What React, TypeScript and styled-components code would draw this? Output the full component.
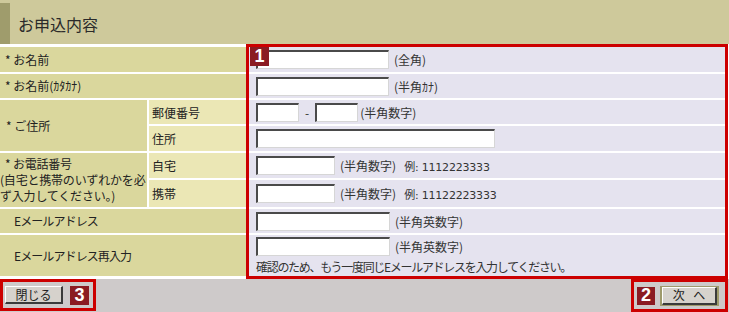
import React from 'react';
import styled, { createGlobalStyle } from 'styled-components';

const GlobalStyle = createGlobalStyle`
  html, body {
    margin: 0;
    padding: 0;
    background: #ffffff;
  }

  body {
    font-family: "Noto Sans CJK JP", "Liberation Sans", sans-serif;
    font-size: 12px;
    color: #222;
  }
`;

const ROWS = '25px 24px 24px 25px 25px 27px 24px 41px';

const Page = styled.div`
  width: 729px;
  height: 312px;
  display: flex;
  flex-direction: column;
  overflow: hidden;
`;

const Header = styled.div`
  height: 44px;
  background: #cec99b;
  display: flex;
  padding-top: 3px;
  box-sizing: border-box;
`;

const Stripe = styled.div`
  width: 10px;
  background: #9f9c6c;
`;

const Title = styled.h1`
  margin: 0;
  padding-left: 8px;
  display: flex;
  align-items: center;
  font-size: 16px;
  font-weight: normal;
  color: #2a2a2a;
`;

const Body = styled.div`
  height: 235px;
  display: flex;
`;

const LabelGrid = styled.div`
  width: 246px;
  display: grid;
  grid-template-columns: 147px 97px;
  grid-template-rows: ${ROWS};
  gap: 2px;
  padding: 3px 0 3px 0;
  box-sizing: border-box;
  background: #ffffff;
`;

interface LabelProps {
  $col: string;
  $row: string;
  $indent?: number;
  $tight?: boolean;
}

const Label = styled.div<LabelProps>`
  grid-column: ${(p) => p.$col};
  grid-row: ${(p) => p.$row};
  background: #dad79d;
  display: flex;
  align-items: center;
  padding-left: ${(p) => p.$indent ?? 5}px;
  line-height: 16px;
  white-space: nowrap;
  letter-spacing: ${(p) => (p.$tight ? '-0.9px' : '0')};
`;

const SubLabel = styled.div<{ $row: string }>`
  grid-column: 2;
  grid-row: ${(p) => p.$row};
  background: #ebe7b5;
  display: flex;
  align-items: center;
  padding-left: 3px;
`;

const PhoneNote = styled.div`
  display: flex;
  flex-direction: column;
  margin-left: -5px;
  letter-spacing: -0.2px;
  span:first-child {
    padding-left: 5px;
  }
`;

const FieldBox = styled.div`
  width: 482px;
  border: 3px solid #cc0000;
  box-sizing: border-box;
  position: relative;
  display: grid;
  grid-template-rows: ${ROWS};
  gap: 2px;
  background: #ffffff;
`;

const Badge = styled.div<{ $size?: number }>`
  width: ${(p) => p.$size ?? 19}px;
  height: ${(p) => p.$size ?? 19}px;
  background: #8b1b22;
  color: #ffffff;
  font-family: "Liberation Sans", Arial, sans-serif;
  font-weight: bold;
  font-size: 18px;
  display: flex;
  align-items: center;
  justify-content: center;
  flex-shrink: 0;
`;

const CornerBadge = styled(Badge)`
  position: absolute;
  top: 0;
  left: 1px;
  z-index: 2;
`;

const FieldRow = styled.div<{ $stack?: boolean }>`
  background: #e5e3ef;
  display: flex;
  flex-direction: ${(p) => (p.$stack ? 'column' : 'row')};
  align-items: ${(p) => (p.$stack ? 'flex-start' : 'center')};
  padding: ${(p) => (p.$stack ? '2px 0 0 7px' : '0 0 0 7px')};
  gap: ${(p) => (p.$stack ? '2px' : '0')};
`;

const Line = styled.div`
  display: flex;
  align-items: center;
`;

const Note = styled.span`
  letter-spacing: -1.3px;
  color: #333;
`;

const TextInput = styled.input<{ $w: number }>`
  width: ${(p) => p.$w}px;
  height: 19px;
  box-sizing: border-box;
  margin: 0;
  padding: 0 2px;
  border-style: solid;
  border-width: 2px 1px 1px 2px;
  border-color: #4a4a4a #d6d6d6 #d6d6d6 #4a4a4a;
  background: #ffffff;
  font-size: 12px;
`;

const Hint = styled.span<{ $gap?: number }>`
  margin-left: ${(p) => p.$gap ?? 5}px;
  color: #333;
  white-space: nowrap;
`;

const Dash = styled.span`
  margin: 0 6px 0 6px;
  color: #333;
`;

const Example = styled.span`
  margin-left: 8px;
  color: #333;
  font-family: "DejaVu Sans", "Noto Sans CJK JP", sans-serif;
  font-size: 11px;
  letter-spacing: -0.2px;
`;

const Footer = styled.div`
  flex: 1;
  background: #cecaca;
  display: flex;
  justify-content: space-between;
  align-items: flex-start;
`;

const ActionGroup = styled.div<{ $right?: boolean }>`
  border: 3px solid #cc0000;
  height: ${(p) => (p.$right ? 33 : 32)}px;
  box-sizing: border-box;
  display: flex;
  align-items: center;
  gap: ${(p) => (p.$right ? 5 : 7)}px;
  padding: ${(p) => (p.$right ? '0 6px 0 3px' : '0 4px 0 2px')};
  margin-right: ${(p) => (p.$right ? 1 : 0)}px;
`;

const ButtonFrame = styled.div`
  background: #9e9a6b;
  padding: 1px 2px;
  display: flex;
`;

const ClassicButton = styled.button<{ $w: number }>`
  width: ${(p) => p.$w}px;
  height: 18px;
  margin: 0;
  padding: 0;
  background: #d6d2cc;
  border-style: solid;
  border-width: 1px 2px 2px 1px;
  border-color: #ffffff #3a3a3a #3a3a3a #ffffff;
  font-family: "Noto Sans CJK JP", sans-serif;
  font-size: 12px;
  line-height: 14px;
  color: #222;
  word-spacing: 6px;
`;

export default function App() {
  return (
    <Page>
      <GlobalStyle />
      <Header>
        <Stripe />
        <Title>お申込内容</Title>
      </Header>
      <Body>
        <LabelGrid>
          <Label $col="1 / 3" $row="1">* お名前</Label>
          <Label $col="1 / 3" $row="2">* お名前(ｶﾀｶﾅ)</Label>
          <Label $col="1" $row="3 / 5" $indent={6}>* ご住所</Label>
          <SubLabel $row="3">郵便番号</SubLabel>
          <SubLabel $row="4">住所</SubLabel>
          <Label $col="1" $row="5 / 7">
            <PhoneNote>
              <span>* お電話番号</span>
              <span>(自宅と携帯のいずれかを必</span>
              <span>ず入力してください。)</span>
            </PhoneNote>
          </Label>
          <SubLabel $row="5">自宅</SubLabel>
          <SubLabel $row="6">携帯</SubLabel>
          <Label $col="1 / 3" $row="7" $indent={14} $tight>Eメールアドレス</Label>
          <Label $col="1 / 3" $row="8" $indent={14} $tight>Eメールアドレス再入力</Label>
        </LabelGrid>
        <FieldBox>
          <CornerBadge>1</CornerBadge>
          <FieldRow>
            <TextInput $w={133} />
            <Hint>(全角)</Hint>
          </FieldRow>
          <FieldRow>
            <TextInput $w={133} />
            <Hint>(半角ｶﾅ)</Hint>
          </FieldRow>
          <FieldRow>
            <TextInput $w={43} />
            <Dash>-</Dash>
            <TextInput $w={43} />
            <Hint $gap={2}>(半角数字)</Hint>
          </FieldRow>
          <FieldRow>
            <TextInput $w={239} />
          </FieldRow>
          <FieldRow>
            <TextInput $w={79} />
            <Hint>(半角数字)</Hint>
            <Example>例: 1112223333</Example>
          </FieldRow>
          <FieldRow>
            <TextInput $w={79} />
            <Hint>(半角数字)</Hint>
            <Example>例: 11122223333</Example>
          </FieldRow>
          <FieldRow>
            <TextInput $w={134} />
            <Hint>(半角英数字)</Hint>
          </FieldRow>
          <FieldRow $stack>
            <Line>
              <TextInput $w={134} />
              <Hint>(半角英数字)</Hint>
            </Line>
            <Note>確認のため、もう一度同じEメールアドレスを入力してください。</Note>
          </FieldRow>
        </FieldBox>
      </Body>
      <Footer>
        <ActionGroup>
          <ClassicButton $w={58}>閉じる</ClassicButton>
          <Badge>3</Badge>
        </ActionGroup>
        <ActionGroup $right>
          <Badge $size={18}>2</Badge>
          <ButtonFrame>
            <ClassicButton $w={55}>次 へ</ClassicButton>
          </ButtonFrame>
        </ActionGroup>
      </Footer>
    </Page>
  );
}
